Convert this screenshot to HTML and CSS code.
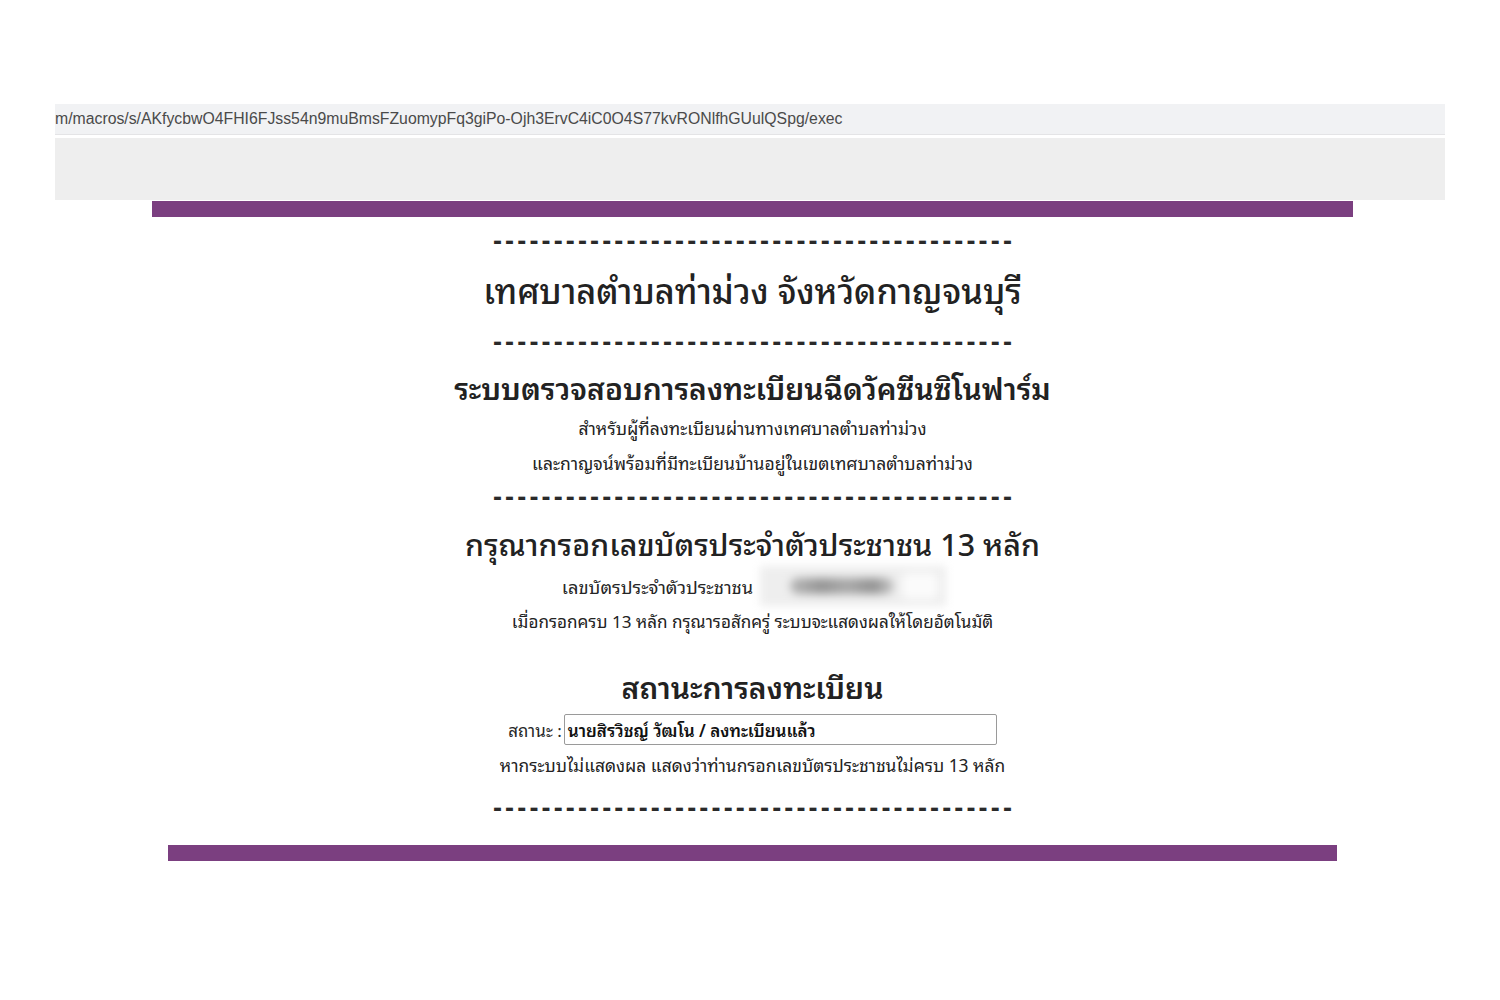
FILE: index.html
```html
<!DOCTYPE html>
<html lang="th">
<head>
<meta charset="utf-8">
<title>ระบบตรวจสอบการลงทะเบียนฉีดวัคซีนซิโนฟาร์ม</title>
<link rel="stylesheet" href="styles.css">
</head>
<body>
<div class="browser">
  <div class="urlbar">m/macros/s/AKfycbwO4FHI6FJss54n9muBmsFZuomypFq3giPo-Ojh3ErvC4iC0O4S77kvRONlfhGUulQSpg/exec</div>
  <div class="toolbar"></div>
</div>
<div class="page">
  <div class="bar bar-top"></div>
  <div class="content">
    <div class="dash dash-1">-------------------------------------------</div>
    <h1 class="title">เทศบาลตำบลท่าม่วง จังหวัดกาญจนบุรี</h1>
    <div class="dash dash-2">-------------------------------------------</div>
    <h2 class="heading heading-system">ระบบตรวจสอบการลงทะเบียนฉีดวัคซีนซิโนฟาร์ม</h2>
    <p class="note note-1">สำหรับผู้ที่ลงทะเบียนผ่านทางเทศบาลตำบลท่าม่วง</p>
    <p class="note note-2">และกาญจน์พร้อมที่มีทะเบียนบ้านอยู่ในเขตเทศบาลตำบลท่าม่วง</p>
    <div class="dash dash-3">-------------------------------------------</div>
    <h2 class="heading heading-id">กรุณากรอกเลขบัตรประจำตัวประชาชน 13 หลัก</h2>
    <div class="id-row">
      <span class="id-label">เลขบัตรประจำตัวประชาชน</span>
      <span class="id-field"><span class="id-blob"></span><span class="id-glare"></span></span>
    </div>
    <p class="note note-3">เมื่อกรอกครบ 13 หลัก กรุณารอสักครู่ ระบบจะแสดงผลให้โดยอัตโนมัติ</p>
    <h2 class="heading heading-status">สถานะการลงทะเบียน</h2>
    <div class="status-row">
      <span class="status-label">สถานะ :</span>
      <span class="status-field">นายสิรวิชญ์ วัฒโน / ลงทะเบียนแล้ว</span>
    </div>
    <p class="note note-4">หากระบบไม่แสดงผล แสดงว่าท่านกรอกเลขบัตรประชาชนไม่ครบ 13 หลัก</p>
    <div class="dash dash-4">-------------------------------------------</div>
  </div>
  <div class="bar bar-bottom"></div>
</div>
</body>
</html>
```

FILE: styles.css
```css
html, body {
  margin: 0;
  padding: 0;
  background: #ffffff;
}

body {
  font-family: "Noto Sans Thai Looped", "Loma", "Garuda", "Waree", "Sarabun", "Tlwg Typo", "Noto Serif Thai", "Noto Sans Thai", sans-serif;
  color: #262626;
}

.browser {
  margin: 104px 0 0 55px;
  width: 1390px;
}

.urlbar {
  height: 30px;
  line-height: 30px;
  background: #f1f2f4;
  font-family: "Liberation Sans", Arial, sans-serif;
  font-size: 15.8px;
  color: #4a4a4a;
  white-space: nowrap;
  overflow: hidden;
  border-bottom: 1px solid #e4e4e6;
}

.toolbar {
  height: 62px;
  margin-top: 3px;
  background: #eeeeee;
}

.page {
  display: flex;
  flex-direction: column;
  align-items: flex-start;
}

.bar {
  height: 16px;
  background: #7b3f80;
}

.bar-top {
  width: 1201px;
  margin-left: 152px;
  margin-top: 1px;
}

.bar-bottom {
  width: 1169px;
  margin-left: 168px;
  margin-top: 12px;
}

.content {
  width: 1201px;
  margin-left: 152px;
  text-align: center;
}

.dash {
  font-family: "Liberation Sans", Arial, sans-serif;
  font-weight: bold;
  font-size: 27px;
  letter-spacing: 3.15px;
  color: #2a2a2a;
  white-space: nowrap;
  padding-left: 3px;
}

.dash-1 { height: 48px; line-height: 48px; }
.dash-2 { height: 50px; line-height: 50px; }
.dash-3 { height: 36px; line-height: 36px; }
.dash-4 { height: 50px; line-height: 50px; }

.title {
  margin: 0;
  height: 52px;
  line-height: 48px;
  font-size: 34.3px;
  font-weight: 500;
  color: #222;
}

.heading {
  margin: 0;
  font-size: 30px;
  font-weight: 600;
  color: #222;
}

.heading-system {
  height: 42px;
  line-height: 40px;
}

.heading-id {
  padding-top: 6px;
  height: 45px;
  line-height: 43px;
  font-size: 30.4px;
  font-weight: 500;
}

.heading-status {
  padding-top: 25px;
  height: 52px;
  line-height: 50px;
}

.note {
  margin: 0;
  font-size: 17.5px;
  color: #222;
}

.note-1 { height: 36px; line-height: 36px; }
.note-2 { height: 34px; line-height: 34px; }
.note-3 { height: 30px; line-height: 30px; font-size: 17.1px; }
.note-4 { height: 38px; line-height: 38px; font-size: 17.4px; }

.id-row {
  height: 40px;
  display: flex;
  justify-content: center;
  align-items: center;
  gap: 7px;
  padding-left: 3px;
}

.id-label {
  font-size: 18.3px;
  line-height: 36px;
}

.id-field {
  width: 186px;
  height: 40px;
  background: #eeeeee;
  display: flex;
  align-items: center;
  filter: blur(4px);
}

.id-blob {
  width: 104px;
  height: 16px;
  margin-left: 30px;
  border-radius: 8px;
  background: linear-gradient(90deg, #b8b8b8, #959595 30%, #a9a9a9 55%, #929292 80%, #c8c8c8);
}

.id-glare {
  width: 36px;
  height: 26px;
  margin-left: 8px;
  background: #fbfbfb;
  border-radius: 6px;
}

.status-row {
  height: 32px;
  display: flex;
  justify-content: center;
  align-items: center;
  gap: 2px;
}

.status-label {
  font-size: 17px;
}

.status-field {
  box-sizing: border-box;
  width: 433px;
  height: 31px;
  line-height: 29px;
  border: 1px solid #9a9a9a;
  border-radius: 2px;
  text-align: left;
  padding-left: 3px;
  font-size: 17px;
  font-weight: 600;
  color: #111;
}
```
